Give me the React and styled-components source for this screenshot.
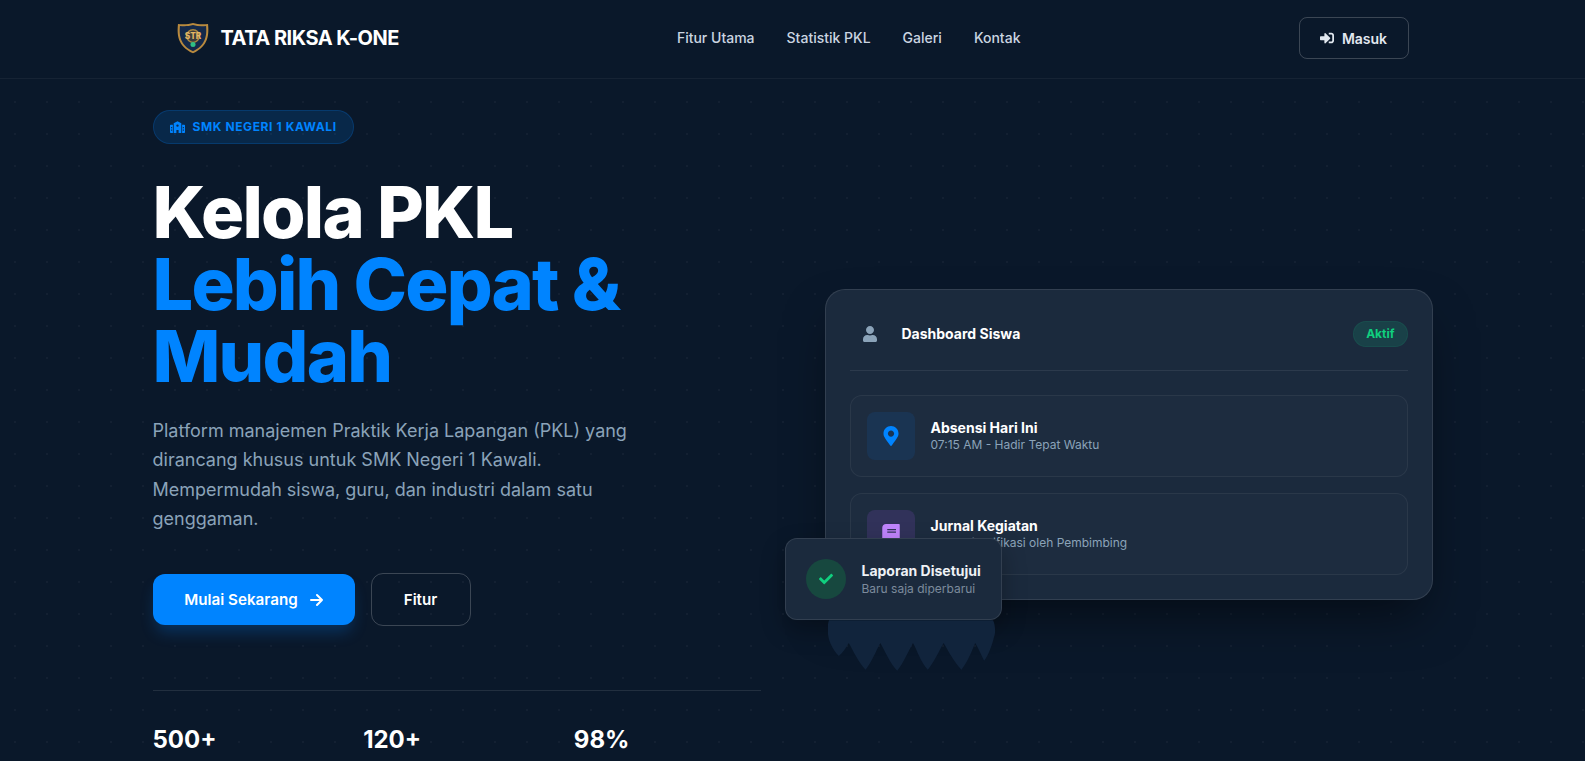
import React from "react";
import styled, { createGlobalStyle } from "styled-components";
import { FaSignInAlt, FaMapMarkerAlt, FaUser, FaCheck, FaBook } from "react-icons/fa";

const Global = createGlobalStyle`
  * { box-sizing: border-box; }
  html, body { margin: 0; height: 761px; overflow: hidden; background: #0a182a; }
  body { font-family: Inter, "Liberation Sans", sans-serif; color: #fff; }
`;
const Page = styled.div`
  width: 1585px; height: 761px; overflow: hidden; background-color: #0a182a;
  background-image: radial-gradient(rgba(255,255,255,0.035) 1px, transparent 1px);
  background-size: 32px 32px;
  background-position: -1px -10px;
`;
const Nav = styled.header`
  height: 79px; padding-bottom: 2px; border-bottom: 1px solid rgba(255,255,255,0.05); display: flex; justify-content: center;
  background: #0a182a;
`;
const NavInner = styled.div`
  width: 1280px; padding: 0 24px; display: flex; justify-content: space-between; align-items: center;
`;
const Brand = styled.div`display: flex; align-items: center; gap: 12px;`;
const BrandName = styled.span`font-size: 20px; font-weight: 700; letter-spacing: -0.5px; color: #fff;`;
const Links = styled.nav`display: flex; gap: 32px; padding-bottom: 2px;`;
const NavLink = styled.a`font-size: 14px; font-weight: 500; color: #cbd5e1;`;
const Login = styled.button`
  width: 110px; height: 42px; border: 1px solid rgba(255,255,255,0.2); border-radius: 8px; background: transparent;
  color: #e2e8f0; font: 600 14px Inter, sans-serif; display: flex; align-items: center; justify-content: center; gap: 8px;
`;
const Hero = styled.main`
  width: 1280px; margin: 0 auto; display: grid; grid-template-columns: 608px 608px; gap: 64px; align-items: start;
`;
const Left = styled.section`padding-top: 31px;`;
const Pill = styled.div`
  display: inline-flex; align-items: center; gap: 8px; height: 34px; padding: 0 16px 1px; border-radius: 999px;
  background: rgba(0,132,255,0.15); border: 1px solid rgba(0,132,255,0.2); color: #0084ff;
  font-size: 12px; font-weight: 700; letter-spacing: 0.6px;
`;
const Title = styled.h1`
  margin: 32px 0 0; font-size: 72px; line-height: 72px; font-weight: 800; letter-spacing: -1.8px; color: #fff;
`;
const Accent = styled.span`color: #0084ff; display: block;`;
const Lead = styled.p`
  margin: 24px 0 0; width: 490px; font-size: 18px; line-height: 29.25px; color: #8ba3b9; font-weight: 400;
`;
const Actions = styled.div`display: flex; gap: 16px; margin-top: 40px; align-items: center;`;
const Primary = styled.button`
  width: 202px; height: 51px; border: 0; border-radius: 12px; background: #0084ff; color: #fff;
  font: 600 15.2px Inter, sans-serif; display: flex; align-items: center; justify-content: center; gap: 12px;
  box-shadow: 0 10px 15px -3px rgba(0,132,255,0.25);
`;
const Secondary = styled.button`
  width: 100px; height: 53px; border: 1px solid rgba(255,255,255,0.2); border-radius: 12px; background: transparent;
  color: #fff; font: 600 15.2px Inter, sans-serif;
`;
const Stats = styled.div`
  margin-top: 64px; padding-top: 33px; border-top: 1px solid rgba(255,255,255,0.1);
  display: grid; grid-template-columns: repeat(3, 1fr); gap: 24px; width: 608px;
`;
const Stat = styled.div`font-size: 24px; font-weight: 700; color: #fff; line-height: 32px;`;
const Right = styled.section`position: relative; margin-top: 210px;`;
const Card = styled.div`
  width: 608px; height: 311px; background: #1b2a3d; border: 1px solid rgba(255,255,255,0.1); border-radius: 20px;
  padding: 24px; box-shadow: 0 25px 50px -12px rgba(0,0,0,0.5);
`;
const CardHead = styled.div`
  height: 57px; margin-bottom: 24px; padding-bottom: 17px; border-bottom: 1px solid rgba(255,255,255,0.08);
  display: flex; align-items: center;
`;
const HeadIcon = styled.span`width: 40px; display: flex; justify-content: center; color: #8ba3b9;`;
const HeadTitle = styled.span`margin-left: 12px; font-size: 14px; font-weight: 700; color: #fff; flex: 1;`;
const Badge = styled.span`
  height: 26px; padding: 0 12px; border-radius: 999px; display: flex; align-items: center; font-size: 12px; font-weight: 700;
  color: #10d07f; background: rgba(16,185,129,0.16); border: 1px solid rgba(16,185,129,0.1);
`;
const Row = styled.div`
  height: 82px; margin-bottom: 16px; border: 1px solid rgba(255,255,255,0.06); border-radius: 12px; padding: 16px;
  display: flex; align-items: center; gap: 16px; background: rgba(255,255,255,0.01);
`;
const RowIcon = styled.div`
  width: 48px; height: 48px; border-radius: 8px; display: flex; align-items: center; justify-content: center;
  background: ${p => p.$bg}; color: ${p => p.$fg};
`;
const RowTitle = styled.div`font-size: 14px; font-weight: 700; color: #fff; line-height: 17px;`;
const RowSub = styled.div`font-size: 12px; color: #8ba3b9; line-height: 18px;`;
const Toast = styled.div`
  position: absolute; left: -40px; bottom: -20px; width: 217px; height: 82px; background: #1b2a3d;
  border: 1px solid rgba(255,255,255,0.1); border-radius: 12px; display: flex; align-items: center; gap: 16px; padding: 0 20px;
  box-shadow: 0 10px 25px rgba(0,0,0,0.3);
`;
const ToastIcon = styled.div`
  width: 40px; height: 40px; flex: none; border-radius: 50%; background: #17483f; color: #10d07f;
  display: flex; align-items: center; justify-content: center;
`;
const ToastText = styled.div`padding-top: 2px;`;
const ToastTitle = styled.div`font-size: 14px; font-weight: 700; color: #eef1f5; line-height: 16px; white-space: nowrap;`;
const ToastSub = styled.div`font-size: 12px; color: #7c8a9c; line-height: 16px; margin-top: 2px; white-space: nowrap;`;
const Jag = styled.svg`position: absolute; left: 3px; bottom: -74px;`;

const Logo = () => (
  <svg width="32" height="32" viewBox="0 0 33 32">
    <path d="M16.5 0.5C21 2 27 2.2 32 1.5C33 12 33 24 16.5 31.8C0 24 0 12 1 1.5C6 2.2 12 2 16.5 0.5Z" fill="#b98a3e" />
    <path d="M16.5 2.6C21 3.9 26 4 30 3.5C30.8 13 30 23 16.5 29.6C3 23 2.2 13 3 3.5C7 4 12 3.9 16.5 2.6Z" fill="#14294a" />
    <circle cx="16.5" cy="14" r="6.5" fill="#3a3c3c" stroke="#a9873f" strokeWidth="1.4" />
    <text x="16.5" y="17" textAnchor="middle" fontFamily="Inter, sans-serif" fontWeight="800" fontSize="8.5" fill="#e3b765">STR</text>
    <circle cx="16.5" cy="22.6" r="2.6" fill="#2fbf85" />
  </svg>
);
const SchoolIcon = () => (
  <svg width="15" height="12" viewBox="0 0 15 12">
    <path fill="#0084ff" d="M7.5 0.2L11.3 2.3V12H3.7V2.3Z M0.8 3.8H2.9V12H0.8Q0 12 0 11.2V4.6Q0 3.8 0.8 3.8Z M12.1 3.8H14.2Q15 3.8 15 4.6V11.2Q15 12 14.2 12H12.1Z" />
    <path fill="#0c2a4d" d="M6.4 9H8.6V12H6.4Z M1.1 6H2.2V7.2H1.1Z M1.1 8.6H2.2V9.8H1.1Z M12.8 6H13.9V7.2H12.8Z M12.8 8.6H13.9V9.8H12.8Z M6.3 4.6a1.2 1.2 0 1 0 2.4 0a1.2 1.2 0 1 0-2.4 0Z" />
  </svg>
);

export default function App() {
  return (
    <Page>
      <Global />
      <Nav>
        <NavInner>
          <Brand><Logo /><BrandName>TATA RIKSA K-ONE</BrandName></Brand>
          <Links>
            <NavLink>Fitur Utama</NavLink><NavLink>Statistik PKL</NavLink><NavLink>Galeri</NavLink><NavLink>Kontak</NavLink>
          </Links>
          <Login><FaSignInAlt size={14} />Masuk</Login>
        </NavInner>
      </Nav>
      <Hero>
        <Left>
          <Pill><SchoolIcon />SMK NEGERI 1 KAWALI</Pill>
          <Title>Kelola PKL<Accent>Lebih Cepat &amp; Mudah</Accent></Title>
          <Lead>Platform manajemen Praktik Kerja Lapangan (PKL) yang dirancang khusus untuk SMK Negeri 1 Kawali. Mempermudah siswa, guru, dan industri dalam satu genggaman.</Lead>
          <Actions>
            <Primary>
              Mulai Sekarang
              <svg width="13" height="14" viewBox="0 0 13 14" fill="none" stroke="#fff" strokeWidth="2" strokeLinecap="round" strokeLinejoin="round"><path d="M1 7H12M7 2L12 7L7 12" /></svg>
            </Primary>
            <Secondary>Fitur</Secondary>
          </Actions>
          <Stats><Stat>500+</Stat><Stat>120+</Stat><Stat>98%</Stat></Stats>
        </Left>
        <Right>
          <Card>
            <CardHead>
              <HeadIcon><FaUser size={16} /></HeadIcon>
              <HeadTitle>Dashboard Siswa</HeadTitle>
              <Badge>Aktif</Badge>
            </CardHead>
            <Row>
              <RowIcon $bg="rgba(0,132,255,0.1)" $fg="#0084ff"><FaMapMarkerAlt size={20} /></RowIcon>
              <div><RowTitle>Absensi Hari Ini</RowTitle><RowSub>07:15 AM - Hadir Tepat Waktu</RowSub></div>
            </Row>
            <Row>
              <RowIcon $bg="rgba(168,85,247,0.15)" $fg="#c084fc"><FaBook size={20} /></RowIcon>
              <div><RowTitle>Jurnal Kegiatan</RowTitle><RowSub>Telah diverifikasi oleh Pembimbing</RowSub></div>
            </Row>
          </Card>
          <Toast>
            <ToastIcon><FaCheck size={14} /></ToastIcon>
            <ToastText><ToastTitle>Laporan Disetujui</ToastTitle><ToastSub>Baru saja diperbarui</ToastSub></ToastText>
          </Toast>
          <Jag width="168" height="54" viewBox="0 0 170 54">
            <path fill="#11243c" d="M1 0H167C169 4 170 12 168 17C166 26 162 36 158 41C155 35 152 28 149 23C146 30 141 43 135 50C128 43 121 30 117 23C113 30 107 43 101 50C94 43 90 30 86 23C82 30 76 44 70 51C63 44 57 30 53 23C49 30 44 43 38 50C31 43 25 30 21 23C18 28 15 33 11 36C5 30 1 22 0 14C-1 8 0 3 1 0Z" />
          </Jag>
        </Right>
      </Hero>
    </Page>
  );
}
